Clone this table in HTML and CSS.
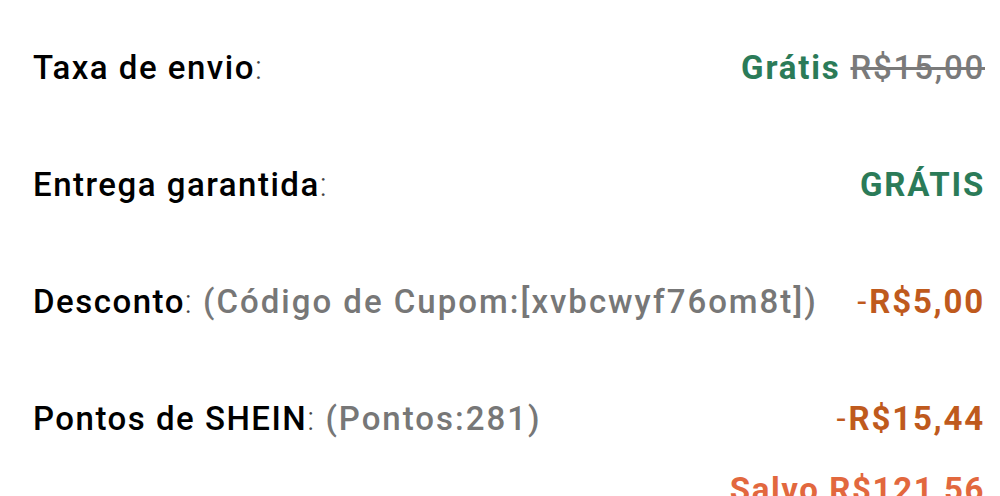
FILE: index.html
```html
<!DOCTYPE html>
<html lang="pt-br">
<head>
    <meta charset="UTF-8">
    <meta name="viewport" content="width=device-width, initial-scale=1.0">
    <title>Resumo do pedido</title>
    <link rel="stylesheet" href="styles.css">
</head>
<body>
    <div class="resumo">
        <div class="linha">
            <div class="rotulo">Taxa de envio<span class="dois-pontos">:</span></div>
            <div class="valor verde">Grátis <s class="riscado">R$15,00</s></div>
        </div>

        <div class="linha">
            <div class="rotulo">Entrega garantida<span class="dois-pontos">:</span></div>
            <div class="valor verde">GRÁTIS</div>
        </div>

        <div class="linha">
            <div class="rotulo">Desconto<span class="dois-pontos">:</span> <span class="detalhe">(Código de Cupom:[xvbcwyf76om8t])</span></div>
            <div class="valor laranja"><span class="sinal">-</span>R$5,00</div>
        </div>

        <div class="linha">
            <div class="rotulo">Pontos de SHEIN<span class="dois-pontos">:</span> <span class="detalhe">(Pontos:281)</span></div>
            <div class="valor laranja"><span class="sinal">-</span>R$15,44</div>
        </div>

        <div class="salvo">Salvo R$121,56</div>
    </div>
</body>
</html>
```

FILE: styles.css
```css
body {
    margin: 0;
    background: #fff;
    font-family: Roboto, "Liberation Sans", Arial, sans-serif;
    overflow: hidden;
}
.resumo {
    padding: 50px 15px 0 33px;
    display: flex;
    flex-direction: column;
    gap: 81px;
}
.linha {
    display: flex;
    justify-content: space-between;
    align-items: baseline;
    font-size: 33px;
    line-height: 36px;
    height: 36px;
    white-space: nowrap;
}
.rotulo {
    color: #000;
    font-weight: 500;
    letter-spacing: 1.5px;
}
.dois-pontos {
    color: #444;
    font-weight: 300;
}
.detalhe {
    color: #777;
    font-weight: 500;
    letter-spacing: 2px;
}
.valor {
    font-weight: 700;
    letter-spacing: 1.8px;
}
.verde {
    color: #2b7b58;
}
.riscado {
    color: #7a7a7a;
    font-weight: 500;
}
.laranja {
    color: #bf5a1d;
}
.sinal {
    font-weight: 400;
    margin-right: 1px;
}
.salvo {
    margin-top: -46px;
    text-align: right;
    font-size: 33px;
    line-height: 36px;
    font-weight: 700;
    color: #e2683e;
    letter-spacing: 1.6px;
}
```
